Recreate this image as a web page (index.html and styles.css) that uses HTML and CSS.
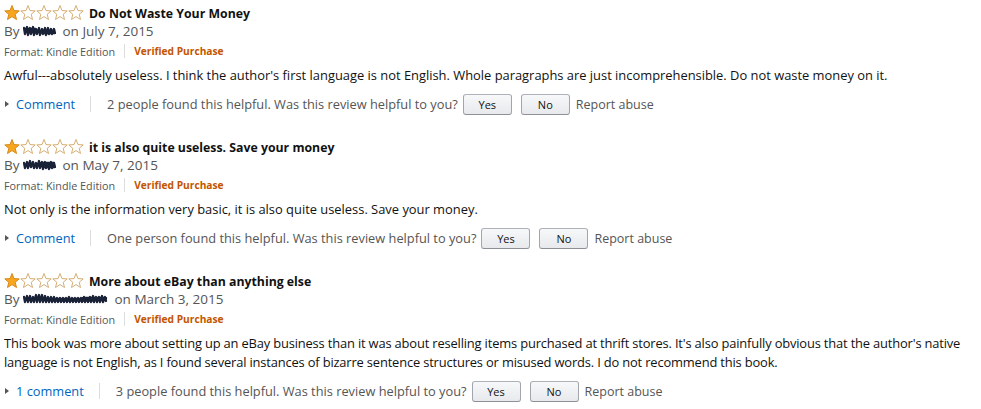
FILE: index.html
```html
<!DOCTYPE html>
<html>
<head>
<meta charset="utf-8">
<link rel="stylesheet" href="styles.css">
</head>
<body>
<div class="reviews">

  <div class="review">
    <div class="head">
      <svg class="stars" width="80" height="18" viewBox="0 0 80 18">
        <g stroke-width="1" stroke-linejoin="round">
          <polygon class="on" points="8,1.5 10,6.6 15.2,6.9 11.2,10.3 12.5,15.5 8,12.6 3.5,15.5 4.8,10.3 0.8,6.9 6,6.6"/>
          <polygon class="off" transform="translate(16,0)" points="8,1.5 10,6.6 15.2,6.9 11.2,10.3 12.5,15.5 8,12.6 3.5,15.5 4.8,10.3 0.8,6.9 6,6.6"/>
          <polygon class="off" transform="translate(32,0)" points="8,1.5 10,6.6 15.2,6.9 11.2,10.3 12.5,15.5 8,12.6 3.5,15.5 4.8,10.3 0.8,6.9 6,6.6"/>
          <polygon class="off" transform="translate(48,0)" points="8,1.5 10,6.6 15.2,6.9 11.2,10.3 12.5,15.5 8,12.6 3.5,15.5 4.8,10.3 0.8,6.9 6,6.6"/>
          <polygon class="off" transform="translate(64,0)" points="8,1.5 10,6.6 15.2,6.9 11.2,10.3 12.5,15.5 8,12.6 3.5,15.5 4.8,10.3 0.8,6.9 6,6.6"/>
        </g>
      </svg>
      <span class="title">Do Not Waste Your Money</span>
    </div>
    <div class="byline">By <svg class="scribble" width="33" height="14" viewBox="0 0 33 14"><path d="M1,4 L2,10 L4,3 L5,11 L7,4 L8,10 L10,3 L11,11 L13,5 L14,10 L16,4 L17,11 L19,5 L20,10 L22,4 L23,11 L25,4 L26,10 L28,5 L29,10 L31,5 L32,9 M2,7 L31,7 M2,5 L12,5 M20,9 L31,9"/></svg> on July 7, 2015</div>
    <div class="meta"><span>Format: Kindle Edition</span><i class="sep"></i><span class="vp">Verified Purchase</span></div>
    <div class="body">Awful---absolutely useless. I think the author's first language is not English. Whole paragraphs are just incomprehensible. Do not waste money on it.</div>
    <div class="actions">
      <a class="comment"><span class="tri"></span>Comment</a>
      <i class="sep"></i>
      <span class="helpful">2 people found this helpful. Was this review helpful to you?</span>
      <button class="btn">Yes</button>
      <button class="btn">No</button>
      <span class="report">Report abuse</span>
    </div>
  </div>

  <div class="review">
    <div class="head">
      <svg class="stars" width="80" height="18" viewBox="0 0 80 18">
        <g stroke-width="1" stroke-linejoin="round">
          <polygon class="on" points="8,1.5 10,6.6 15.2,6.9 11.2,10.3 12.5,15.5 8,12.6 3.5,15.5 4.8,10.3 0.8,6.9 6,6.6"/>
          <polygon class="off" transform="translate(16,0)" points="8,1.5 10,6.6 15.2,6.9 11.2,10.3 12.5,15.5 8,12.6 3.5,15.5 4.8,10.3 0.8,6.9 6,6.6"/>
          <polygon class="off" transform="translate(32,0)" points="8,1.5 10,6.6 15.2,6.9 11.2,10.3 12.5,15.5 8,12.6 3.5,15.5 4.8,10.3 0.8,6.9 6,6.6"/>
          <polygon class="off" transform="translate(48,0)" points="8,1.5 10,6.6 15.2,6.9 11.2,10.3 12.5,15.5 8,12.6 3.5,15.5 4.8,10.3 0.8,6.9 6,6.6"/>
          <polygon class="off" transform="translate(64,0)" points="8,1.5 10,6.6 15.2,6.9 11.2,10.3 12.5,15.5 8,12.6 3.5,15.5 4.8,10.3 0.8,6.9 6,6.6"/>
        </g>
      </svg>
      <span class="title">it is also quite useless. Save your money</span>
    </div>
    <div class="byline">By <svg class="scribble" width="33" height="14" viewBox="0 0 33 14"><path d="M1,5 L2,10 L4,4 L5,10 L7,3 L8,9 L10,4 L11,10 L13,5 L14,10 L16,3 L17,10 L19,4 L20,11 L22,4 L23,10 L25,5 L26,11 L28,4 L29,10 L31,5 L32,9 M2,7 L31,7 M18,5 L31,5 M22,9 L31,9"/></svg> on May 7, 2015</div>
    <div class="meta"><span>Format: Kindle Edition</span><i class="sep"></i><span class="vp">Verified Purchase</span></div>
    <div class="body">Not only is the information very basic, it is also quite useless. Save your money.</div>
    <div class="actions">
      <a class="comment"><span class="tri"></span>Comment</a>
      <i class="sep"></i>
      <span class="helpful">One person found this helpful. Was this review helpful to you?</span>
      <button class="btn">Yes</button>
      <button class="btn">No</button>
      <span class="report">Report abuse</span>
    </div>
  </div>

  <div class="review">
    <div class="head">
      <svg class="stars" width="80" height="18" viewBox="0 0 80 18">
        <g stroke-width="1" stroke-linejoin="round">
          <polygon class="on" points="8,1.5 10,6.6 15.2,6.9 11.2,10.3 12.5,15.5 8,12.6 3.5,15.5 4.8,10.3 0.8,6.9 6,6.6"/>
          <polygon class="off" transform="translate(16,0)" points="8,1.5 10,6.6 15.2,6.9 11.2,10.3 12.5,15.5 8,12.6 3.5,15.5 4.8,10.3 0.8,6.9 6,6.6"/>
          <polygon class="off" transform="translate(32,0)" points="8,1.5 10,6.6 15.2,6.9 11.2,10.3 12.5,15.5 8,12.6 3.5,15.5 4.8,10.3 0.8,6.9 6,6.6"/>
          <polygon class="off" transform="translate(48,0)" points="8,1.5 10,6.6 15.2,6.9 11.2,10.3 12.5,15.5 8,12.6 3.5,15.5 4.8,10.3 0.8,6.9 6,6.6"/>
          <polygon class="off" transform="translate(64,0)" points="8,1.5 10,6.6 15.2,6.9 11.2,10.3 12.5,15.5 8,12.6 3.5,15.5 4.8,10.3 0.8,6.9 6,6.6"/>
        </g>
      </svg>
      <span class="title">More about eBay than anything else</span>
    </div>
    <div class="byline">By <svg class="scribble" width="85" height="14" viewBox="0 0 85 14"><path d="M1,5 L2,10 L4,4 L5,10 L7,4 L8,10 L10,5 L11,10 L13,3 L14,10 L16,3 L17,10 L19,3 L20,10 L22,4 L23,10 L25,5 L26,10 L28,5 L29,10 L31,5 L32,10 L34,6 L35,10 L37,6 L38,10 L40,6 L41,10 L43,6 L44,10 L46,5 L47,10 L49,6 L50,10 L52,6 L53,10 L55,6 L56,10 L58,6 L59,10 L61,5 L62,10 L64,6 L65,10 L67,5 L68,10 L70,4 L71,10 L73,5 L74,10 L76,5 L77,10 L79,4 L80,10 L82,5 L83,9 M2,7 L83,7 M30,8.5 L70,8.5 M60,6 L83,6"/></svg> on March 3, 2015</div>
    <div class="meta"><span>Format: Kindle Edition</span><i class="sep"></i><span class="vp">Verified Purchase</span></div>
    <div class="body tight">This book was more about setting up an eBay business than it was about reselling items purchased at thrift stores. It's also painfully obvious that the author's native language is not English, as I found several instances of bizarre sentence structures or misused words. I do not recommend this book.</div>
    <div class="actions">
      <a class="comment"><span class="tri"></span>1 comment</a>
      <i class="sep"></i>
      <span class="helpful">3 people found this helpful. Was this review helpful to you?</span>
      <button class="btn">Yes</button>
      <button class="btn">No</button>
      <span class="report">Report abuse</span>
    </div>
  </div>

</div>
</body>
</html>
```

FILE: styles.css
```css
html, body {
  margin: 0;
  padding: 0;
  background: #fff;
}
body {
  font-family: "Open Sans", "Noto Sans", sans-serif;
  font-size: 12.9px;
  color: #111;
}
.reviews {
  padding: 4px 0 0 4px;
  width: 972px;
}
.review {
  padding-bottom: 24px;
}
.head {
  display: flex;
  align-items: center;
  height: 18px;
  gap: 5px;
}
.stars { display: block; flex: none; }
.stars .on { fill: #f9a61f; stroke: #d58a17; }
.stars .off { fill: #fff; stroke: #d6ae73; }
.title {
  font-weight: 700;
  font-size: 12.3px;
  color: #111;
}
.byline {
  height: 18px;
  line-height: 18px;
  font-size: 13.5px;
  color: #555;
  display: flex;
  align-items: center;
}
.scribble { display: block; margin: 0 6px 0 4px; }
.scribble path {
  fill: none;
  stroke: #1a2238;
  stroke-width: 2.3;
  stroke-linecap: round;
  stroke-linejoin: round;
}
.meta {
  margin-top: 3px;
  height: 16px;
  display: flex;
  align-items: center;
  font-size: 10.8px;
  color: #555;
}
.meta .sep {
  display: block;
  width: 1px;
  height: 14px;
  background: #ddd;
  margin: 0 9px;
}
.vp {
  color: #c45500;
  font-weight: 700;
  font-size: 10.2px;
}
.body {
  margin-top: 7px;
  line-height: 19px;
}
.body.tight {
  letter-spacing: -0.16px;
}
.actions {
  margin-top: 9px;
  height: 20px;
  display: flex;
  align-items: center;
  color: #555;
  font-size: 12.8px;
}
.comment {
  color: #0066c0;
  display: flex;
  align-items: center;
}
.tri {
  display: block;
  width: 0;
  height: 0;
  border-left: 4px solid #555;
  border-top: 3.5px solid transparent;
  border-bottom: 3.5px solid transparent;
  margin: 0 7px 0 1px;
}
.actions .sep {
  display: block;
  width: 1px;
  height: 16px;
  background: #ddd;
  margin: 0 16px 0 15px;
}
.btn {
  font-family: inherit;
  font-size: 11px;
  color: #111;
  width: 49px;
  height: 21px;
  margin-left: 5px;
  padding: 0;
  border: 1px solid #adb1b8;
  border-color: #adb1b8 #a2a6ac #8d9096;
  border-radius: 3px;
  background: linear-gradient(to bottom, #f7f8fa, #e7e9ec);
}
.btn + .btn { margin-left: 9px; }
.report { margin-left: 6px; font-size: 12.5px; }
```
